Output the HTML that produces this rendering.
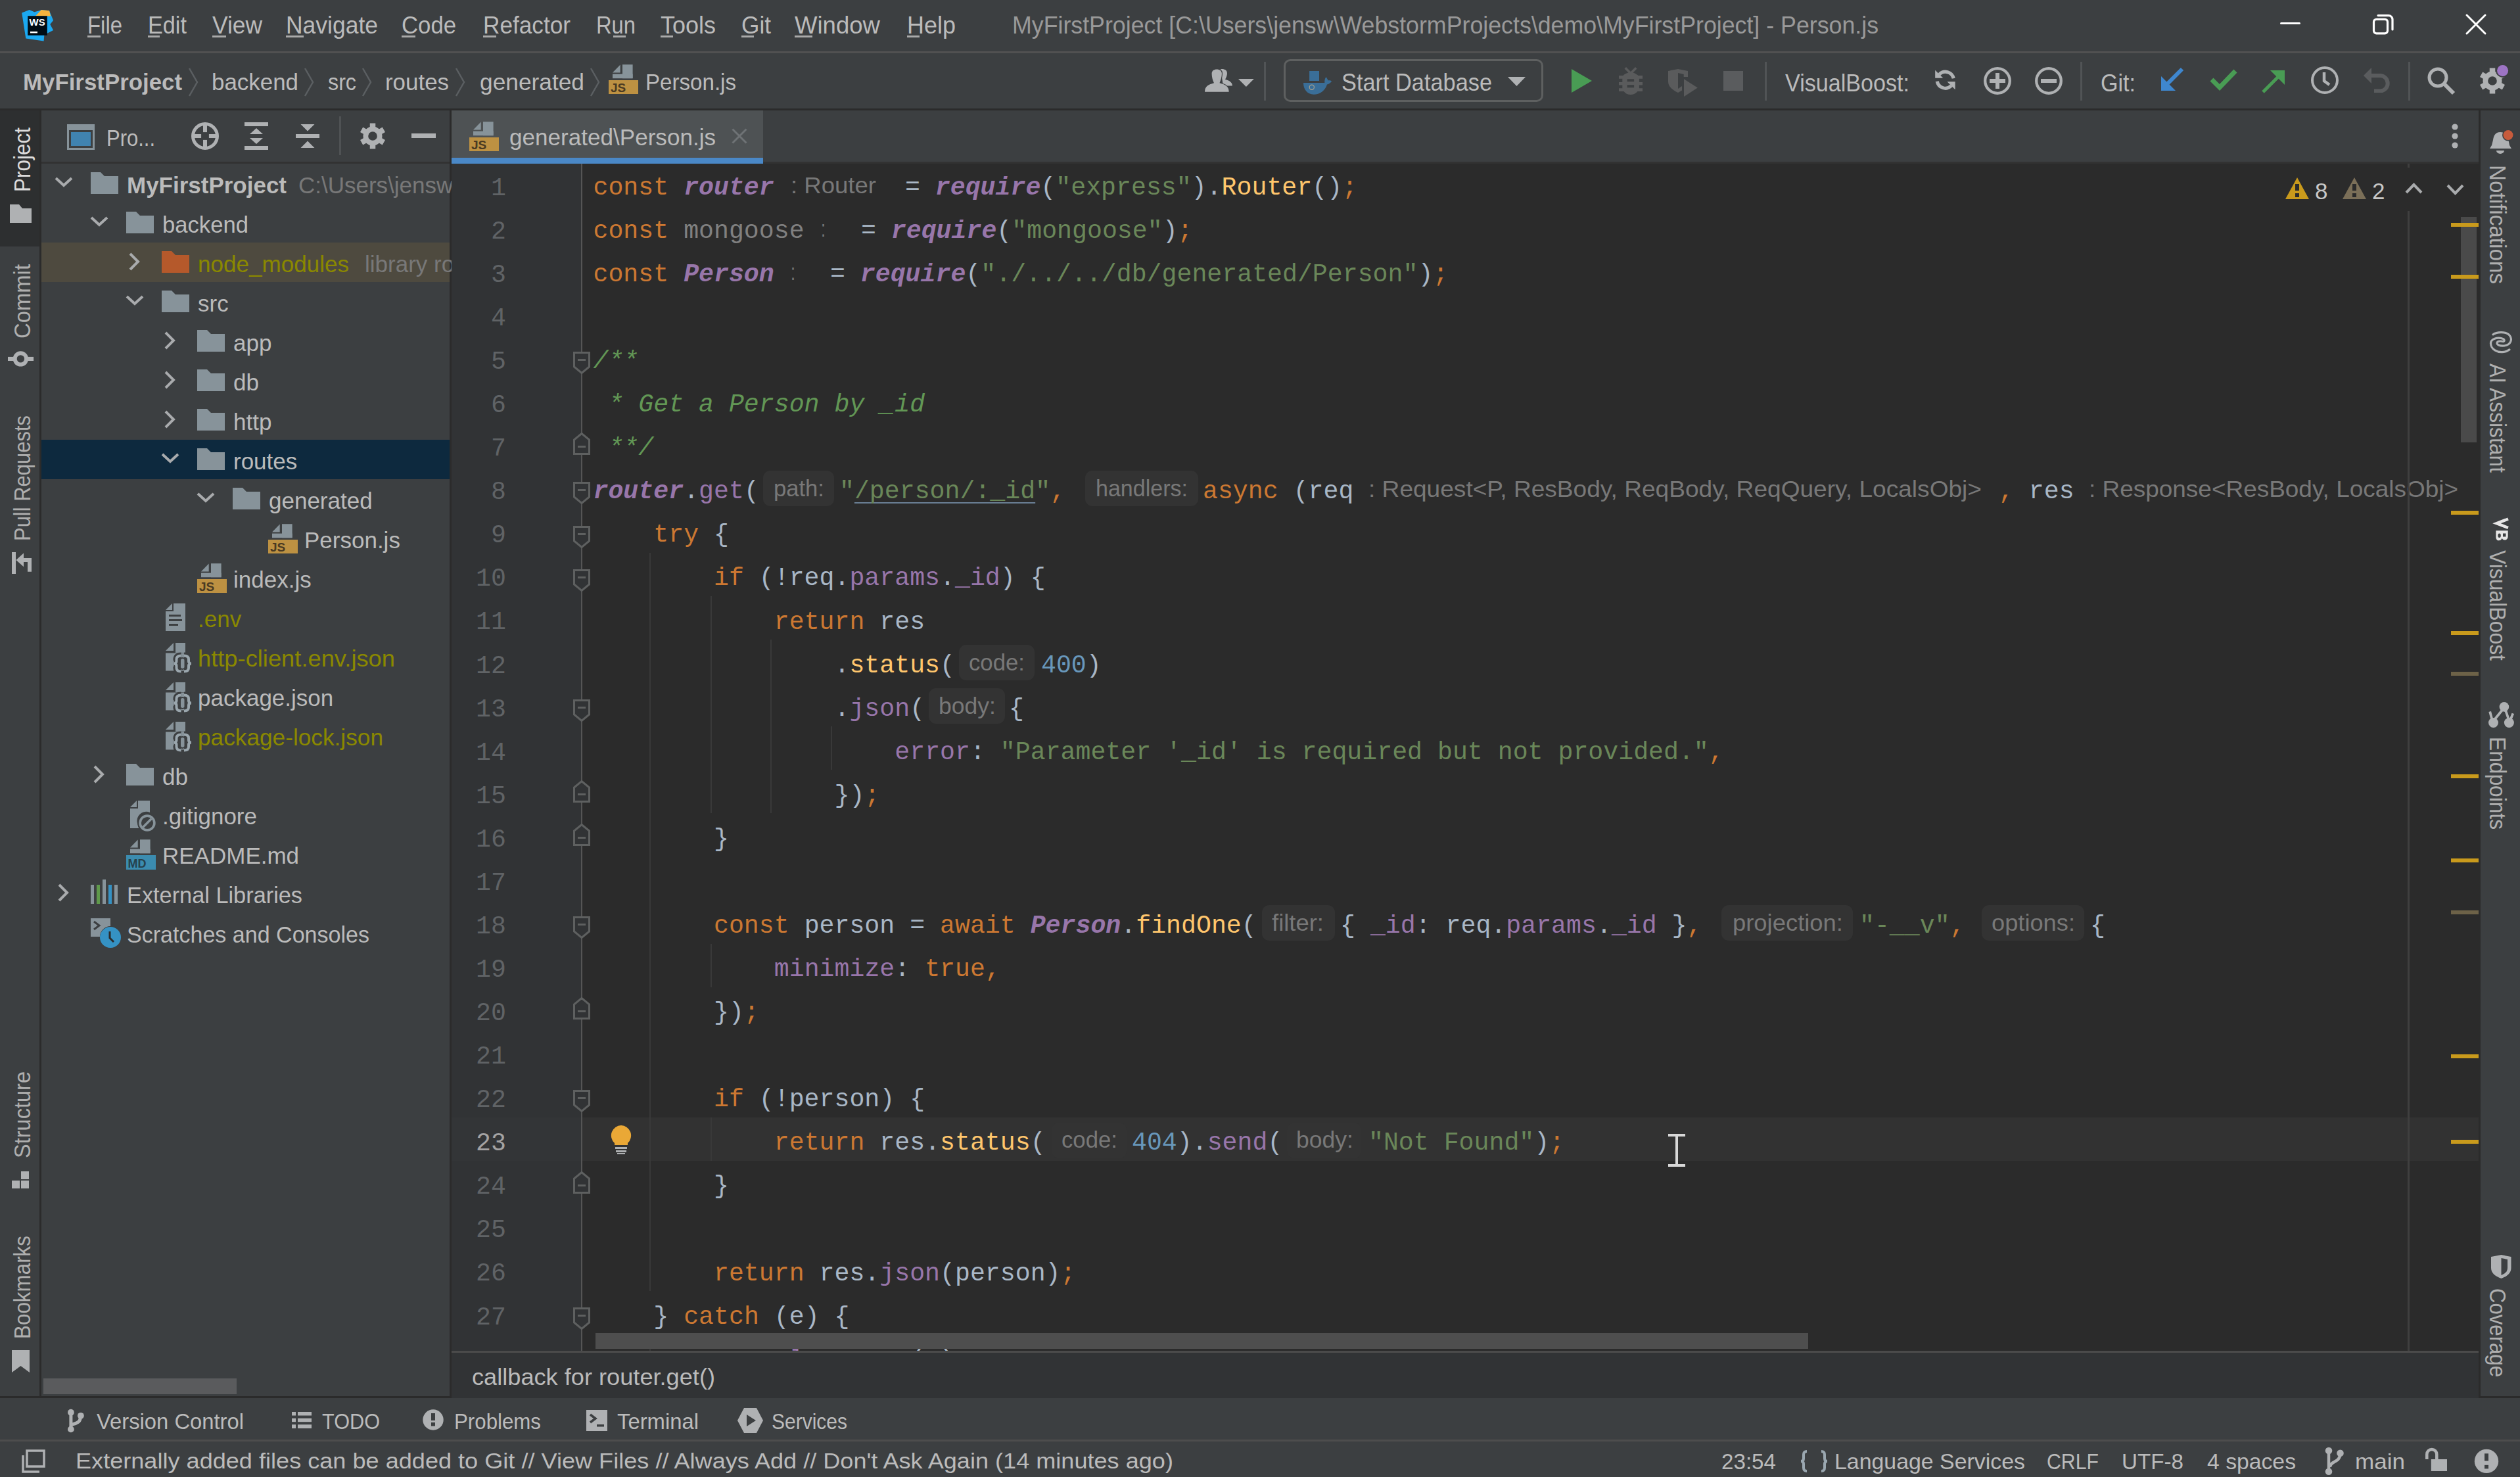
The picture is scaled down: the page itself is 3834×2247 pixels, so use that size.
<!DOCTYPE html>
<html><head><meta charset="utf-8"><style>
html,body{margin:0;padding:0;width:3834px;height:2247px;overflow:hidden;background:#3c3f41}
body>div{position:absolute}
.t{position:absolute;white-space:pre;transform-origin:0 0}
.code{position:absolute;white-space:pre;font-family:'Liberation Mono', monospace;font-size:38.23px;line-height:66px}
.hint{display:inline-block;font-family:'Liberation Sans', sans-serif;color:#787878;background:#3b3b3b;border-radius:12px;text-align:center;vertical-align:top}
</style></head><body>
<div style="left:0px;top:0px;width:3834px;height:2247px;background:#3c3f41;"></div>
<div style="left:0px;top:78px;width:3834px;height:3px;background:#515151;"></div>
<div style="left:0px;top:165px;width:3834px;height:3px;background:#2b2b2b;"></div>
<svg style="position:absolute;left:25px;top:8px;width:65px;height:62px;" viewBox="0 0 65 62"><path d="M8.2 11.6 L19.7 7.1 L27.3 10.3 L34.9 8.2 L37.8 7.1 L50 8.2 L56.1 22.9 L51.3 29 L56.1 38 L42.4 45 L41.6 54.6 L14.3 50.4Z" fill="#1ba8f0"/>
<path d="M29.4 16 L37.8 7.1 L50 8.2 L52 16.4Z" fill="#f5b33e"/>
<rect x="17.2" y="16.2" width="29.6" height="29.6" fill="#000c14"/>
<text x="19.6" y="31" font-family="Liberation Sans" font-weight="bold" font-size="15.5" fill="#fff" textLength="24" lengthAdjust="spacingAndGlyphs">WS</text>
<rect x="21" y="39.9" width="11" height="2.5" fill="#fff"/></svg>
<div id="feda0547f99" class="t" style="left:133.0px;top:20.5px;font-size:36px;line-height:36px;color:#bbbbbb;font-family:'Liberation Sans', sans-serif;transform:scaleX(0.9135);">File</div>
<div id="f23c7e91d99" class="t" style="left:225.0px;top:20.5px;font-size:36px;line-height:36px;color:#bbbbbb;font-family:'Liberation Sans', sans-serif;transform:scaleX(0.9509);">Edit</div>
<div id="f96007ed048" class="t" style="left:323.0px;top:20.5px;font-size:36px;line-height:36px;color:#bbbbbb;font-family:'Liberation Sans', sans-serif;transform:scaleX(0.9820);">View</div>
<div id="f32f33897f7" class="t" style="left:435.0px;top:20.5px;font-size:36px;line-height:36px;color:#bbbbbb;font-family:'Liberation Sans', sans-serif;transform:scaleX(0.9853);">Navigate</div>
<div id="fb002a6941b" class="t" style="left:611.0px;top:20.5px;font-size:36px;line-height:36px;color:#bbbbbb;font-family:'Liberation Sans', sans-serif;transform:scaleX(0.9644);">Code</div>
<div id="f7c903b5134" class="t" style="left:735.0px;top:20.5px;font-size:36px;line-height:36px;color:#bbbbbb;font-family:'Liberation Sans', sans-serif;transform:scaleX(0.9775);">Refactor</div>
<div id="f506e35b7c9" class="t" style="left:907.0px;top:20.5px;font-size:36px;line-height:36px;color:#bbbbbb;font-family:'Liberation Sans', sans-serif;transform:scaleX(0.9084);">Run</div>
<div id="ff6007e103c" class="t" style="left:1005.0px;top:20.5px;font-size:36px;line-height:36px;color:#bbbbbb;font-family:'Liberation Sans', sans-serif;transform:scaleX(0.9994);">Tools</div>
<div id="f9b4eb32b7e" class="t" style="left:1128.0px;top:20.5px;font-size:36px;line-height:36px;color:#bbbbbb;font-family:'Liberation Sans', sans-serif;transform:scaleX(0.9779);">Git</div>
<div id="fdccec290fd" class="t" style="left:1209.0px;top:20.5px;font-size:36px;line-height:36px;color:#bbbbbb;font-family:'Liberation Sans', sans-serif;transform:scaleX(1.0153);">Window</div>
<div id="fa55eff7f53" class="t" style="left:1380.0px;top:20.5px;font-size:36px;line-height:36px;color:#bbbbbb;font-family:'Liberation Sans', sans-serif;transform:scaleX(0.9994);">Help</div>
<div style="left:133px;top:54px;width:20px;height:3px;background:#a9a9a9;"></div>
<div style="left:225px;top:54px;width:18px;height:3px;background:#a9a9a9;"></div>
<div style="left:323px;top:54px;width:21px;height:3px;background:#a9a9a9;"></div>
<div style="left:435px;top:54px;width:27px;height:3px;background:#a9a9a9;"></div>
<div style="left:611px;top:54px;width:21px;height:3px;background:#a9a9a9;"></div>
<div style="left:735px;top:54px;width:20px;height:3px;background:#a9a9a9;"></div>
<div style="left:933px;top:54px;width:19px;height:3px;background:#a9a9a9;"></div>
<div style="left:1005px;top:54px;width:19px;height:3px;background:#a9a9a9;"></div>
<div style="left:1128px;top:54px;width:19px;height:3px;background:#a9a9a9;"></div>
<div style="left:1209px;top:54px;width:27px;height:3px;background:#a9a9a9;"></div>
<div style="left:1380px;top:54px;width:19px;height:3px;background:#a9a9a9;"></div>
<div id="f99410466d1" class="t" style="left:1540.0px;top:20.5px;font-size:36px;line-height:36px;color:#999999;font-family:'Liberation Sans', sans-serif;transform:scaleX(0.9928);">MyFirstProject [C:\Users\jensw\WebstormProjects\demo\MyFirstProject] - Person.js</div>
<div style="left:3469px;top:34px;width:31px;height:3.2px;background:#ffffff;border-radius:2px;"></div>
<svg style="position:absolute;left:3608px;top:20px;width:34px;height:34px;" viewBox="0 0 34 34"><rect x="3.5" y="9.3" width="21" height="21.5" rx="4" fill="none" stroke="#ffffff" stroke-width="3.2"/><path d="M10 3.6 H26 a6 6 0 0 1 6 6 V25" fill="none" stroke="#ffffff" stroke-width="3.2" stroke-linecap="round"/></svg>
<svg style="position:absolute;left:3750px;top:20px;width:34px;height:34px;" viewBox="0 0 34 34"><path d="M3 3 L31 31 M31 3 L3 31" stroke="#ffffff" stroke-width="3" stroke-linecap="round"/></svg>
<div id="fe293cc670c" class="t" style="left:35.0px;top:107.4px;font-size:35px;line-height:35px;color:#bbbbbb;font-family:'Liberation Sans', sans-serif;transform:scaleX(0.9954);font-weight:bold;">MyFirstProject</div>
<div id="f69163ef772" class="t" style="left:322.0px;top:107.4px;font-size:35px;line-height:35px;color:#bbbbbb;font-family:'Liberation Sans', sans-serif;transform:scaleX(0.9975);">backend</div>
<div id="f6094275ac2" class="t" style="left:499.0px;top:107.4px;font-size:35px;line-height:35px;color:#bbbbbb;font-family:'Liberation Sans', sans-serif;transform:scaleX(0.9216);">src</div>
<div id="f3d4729c1db" class="t" style="left:586.0px;top:107.4px;font-size:35px;line-height:35px;color:#bbbbbb;font-family:'Liberation Sans', sans-serif;transform:scaleX(0.9971);">routes</div>
<div id="f08b2ab5368" class="t" style="left:730.0px;top:107.4px;font-size:35px;line-height:35px;color:#bbbbbb;font-family:'Liberation Sans', sans-serif;transform:scaleX(1.0086);">generated</div>
<svg style="position:absolute;left:286px;top:103px;width:16px;height:44px;" viewBox="0 0 16 44"><path d="M2 1 L14 22 L2 43" fill="none" stroke="#5b5f62" stroke-width="2.5"/></svg>
<svg style="position:absolute;left:462px;top:103px;width:16px;height:44px;" viewBox="0 0 16 44"><path d="M2 1 L14 22 L2 43" fill="none" stroke="#5b5f62" stroke-width="2.5"/></svg>
<svg style="position:absolute;left:550px;top:103px;width:16px;height:44px;" viewBox="0 0 16 44"><path d="M2 1 L14 22 L2 43" fill="none" stroke="#5b5f62" stroke-width="2.5"/></svg>
<svg style="position:absolute;left:692px;top:103px;width:16px;height:44px;" viewBox="0 0 16 44"><path d="M2 1 L14 22 L2 43" fill="none" stroke="#5b5f62" stroke-width="2.5"/></svg>
<svg style="position:absolute;left:897px;top:103px;width:16px;height:44px;" viewBox="0 0 16 44"><path d="M2 1 L14 22 L2 43" fill="none" stroke="#5b5f62" stroke-width="2.5"/></svg>
<svg style="position:absolute;left:926px;top:98px;width:46px;height:46px;" viewBox="0 0 46 46"><path d="M6 12.4 L17.7 0.6 V12.4Z" fill="#87939a"/><rect x="21" y="0.2" width="15.6" height="21" fill="#87939a"/><rect x="6" y="14.6" width="30.6" height="6.6" fill="#87939a"/>
<rect x="0" y="24" width="45" height="21" fill="#bd9142"/><text x="3" y="41.5" font-family="Liberation Sans" font-weight="bold" font-size="19" fill="#4a3a22">JS</text></svg>
<div id="f7bb66304bf" class="t" style="left:982.0px;top:107.4px;font-size:35px;line-height:35px;color:#bbbbbb;font-family:'Liberation Sans', sans-serif;transform:scaleX(0.9458);">Person.js</div>
<svg style="position:absolute;left:1825px;top:95px;width:90px;height:55px;" viewBox="0 0 90 55"><path d="M32 10.2 C37.5 9.5 42 11.5 42 16.5 C42 20 40.5 23 39 25.8 C45 27.5 49.9 30 49.9 35.4 H36 Z" fill="#afb1b3"/><path d="M8 44.7 C8 36 14 33.5 22 31.2 C20 27 18.6 22 18.6 17 C18.6 12.5 22 10.4 26.2 10.4 C30.5 10.4 33.9 12.5 33.9 17 C33.9 22 32.2 27 30.5 31.2 C38.5 33.5 44.7 36 44.7 44.7 Z" fill="#afb1b3" stroke="#3c3f41" stroke-width="2.2" paint-order="stroke"/><path d="M59 25 H82.8 L70.9 36.9Z" fill="#afb1b3"/></svg>
<div style="left:1923px;top:94px;width:3px;height:59px;background:#515456;"></div>
<div style="left:1953px;top:90px;width:395px;height:65px;box-sizing:border-box;border:3px solid #5e6060;border-radius:10px;position:absolute"></div>
<svg style="position:absolute;left:1975px;top:100px;width:60px;height:50px;" viewBox="0 0 60 50"><rect x="17.1" y="8" width="14.9" height="15" fill="#3a6e98"/><path d="M8 26 H40.3 C40 22 41 19 42.5 17.3 C44 19 45 21 45.5 22.5 C47.5 22 49.5 22.5 51.1 23.7 C49 26.5 46.5 28 44 28.5 C41 38 33 43.7 23.7 43.7 C14 43.7 8 36 8 26Z" fill="#3a6e98"/><circle cx="20.8" cy="32.8" r="3.6" fill="none" stroke="#a9a28d" stroke-width="1.2"/></svg>
<div id="fde960cc09b" class="t" style="left:2041.0px;top:107.5px;font-size:36px;line-height:36px;color:#bbbbbb;font-family:'Liberation Sans', sans-serif;transform:scaleX(0.9536);">Start Database</div>
<svg style="position:absolute;left:2294px;top:117px;width:27px;height:14px;" viewBox="0 0 27 14"><path d="M0 0 H27 L13.5 14Z" fill="#afb1b3"/></svg>
<svg style="position:absolute;left:2391px;top:105px;width:31px;height:36px;" viewBox="0 0 31 36"><path d="M0 0 L31 18 L0 36Z" fill="#499c54"/></svg>
<svg style="position:absolute;left:2455px;top:95px;width:140px;height:55px;" viewBox="0 0 140 55"><g fill="#5a5b5c"><path d="M16.5 9.5 L19 7 L26 14 L33 7 L35.5 9.5 L29.5 15.5 C34 17 37 19.5 37.5 20 H44 V24.7 H38.9 V30 H44 V34.4 H38.9 V39.2 H44 V44 H36.5 C34 47 30 49 25.9 49 C21.5 49 17.5 47 15.5 44 H8 V39.2 H13.3 V34.4 H8 V30 H13.3 V24.7 H8 V20 H14.5 C15.5 18.5 18.5 16.5 22.5 15.5Z"/></g><rect x="20.6" y="25.3" width="10.5" height="3.9" fill="#3c3f41"/><rect x="20.6" y="34.2" width="10.5" height="4.1" fill="#3c3f41"/><path d="M83 13 L98 10 L113 13 V22 H106.7 V18 L98 16 V40 L104 36 V42.5 L98 46 C90 42 83 37 83 29Z" fill="#5a5b5c"/><path d="M107 25.3 L127.8 38.6 L107 52Z" fill="#5a5b5c"/></svg>
<div style="left:2622px;top:108px;width:30px;height:30px;background:#5a5c5e;"></div>
<div style="left:2685px;top:94px;width:3px;height:59px;background:#515456;"></div>
<div id="f8377cdb799" class="t" style="left:2716.0px;top:108.5px;font-size:36px;line-height:36px;color:#bbbbbb;font-family:'Liberation Sans', sans-serif;transform:scaleX(0.9475);">VisualBoost:</div>
<svg style="position:absolute;left:2935px;top:95px;width:45px;height:50px;" viewBox="0 0 45 50"><path d="M15.5 18.3 A12.7 12.7 0 0 1 37.2 24.3" fill="none" stroke="#afb1b3" stroke-width="5.2"/><path d="M9.2 11.7 V23.75 H21.25Z" fill="#afb1b3"/><path d="M12.2 28.8 A12.7 12.7 0 0 0 33.8 35.3" fill="none" stroke="#afb1b3" stroke-width="5.2"/><path d="M27.5 29.2 H39.6 V41.25Z" fill="#afb1b3"/></svg>
<svg style="position:absolute;left:3017px;top:101px;width:44px;height:44px;" viewBox="0 0 44 44"><circle cx="22" cy="22" r="18.8" fill="none" stroke="#afb1b3" stroke-width="4.3"/><rect x="10" y="19" width="24" height="6" fill="#afb1b3"/><rect x="19" y="10" width="6" height="24" fill="#afb1b3"/></svg>
<svg style="position:absolute;left:3095px;top:101px;width:44px;height:44px;" viewBox="0 0 44 44"><circle cx="22" cy="22" r="18.8" fill="none" stroke="#afb1b3" stroke-width="4.3"/><rect x="10" y="19" width="24" height="6" fill="#afb1b3"/></svg>
<div style="left:3165px;top:94px;width:3px;height:59px;background:#515456;"></div>
<div id="f1daf2e1d26" class="t" style="left:3196.0px;top:108.5px;font-size:36px;line-height:36px;color:#bbbbbb;font-family:'Liberation Sans', sans-serif;transform:scaleX(0.9462);">Git:</div>
<svg style="position:absolute;left:3288px;top:102px;width:36px;height:36px;" viewBox="0 0 36 36"><path d="M32 3 L8 27" stroke="#3f87cf" stroke-width="6"/><path d="M0 14 V36 H22Z" fill="#3f87cf"/></svg>
<svg style="position:absolute;left:3362px;top:104px;width:42px;height:34px;" viewBox="0 0 42 34"><path d="M3 17 L15 29 L39 4" fill="none" stroke="#499c54" stroke-width="7"/></svg>
<svg style="position:absolute;left:3440px;top:107px;width:36px;height:36px;" viewBox="0 0 36 36"><path d="M3 33 L27 9" stroke="#499c54" stroke-width="5"/><path d="M14 0 H36 V22Z" fill="#499c54"/></svg>
<svg style="position:absolute;left:3515px;top:100px;width:44px;height:44px;" viewBox="0 0 44 44"><circle cx="22" cy="22" r="19" fill="none" stroke="#afb1b3" stroke-width="4"/><path d="M21 10 V23 L29 29" fill="none" stroke="#afb1b3" stroke-width="4.5"/></svg>
<svg style="position:absolute;left:3596px;top:101px;width:42px;height:40px;" viewBox="0 0 42 40"><path d="M8 14 H26 A11.8 11.8 0 0 1 26 37.5 H16" fill="none" stroke="#5a5c5e" stroke-width="6"/><path d="M0 14 L12 2 V26Z" fill="#5a5c5e"/></svg>
<div style="left:3664px;top:94px;width:3px;height:59px;background:#515456;"></div>
<svg style="position:absolute;left:3692px;top:101px;width:44px;height:44px;" viewBox="0 0 44 44"><circle cx="17" cy="17" r="13" fill="none" stroke="#afb1b3" stroke-width="5"/><path d="M26 26 L41 41" stroke="#afb1b3" stroke-width="6"/></svg>
<svg style="position:absolute;left:3762px;top:93px;width:60px;height:60px;" viewBox="0 0 60 60"><g transform="translate(30 30)"><circle r="14.5" fill="#afb1b3"/><rect x="-4.25" y="-19.5" width="8.5" height="39.0" fill="#afb1b3" transform="rotate(0)"/><rect x="-4.25" y="-19.5" width="8.5" height="39.0" fill="#afb1b3" transform="rotate(60)"/><rect x="-4.25" y="-19.5" width="8.5" height="39.0" fill="#afb1b3" transform="rotate(120)"/><circle r="6.8" fill="#3c3f41"/></g><circle cx="45.6" cy="14.4" r="10.5" fill="#3c3f41"/><circle cx="45.6" cy="14.4" r="8.5" fill="#9d74c4"/></svg>
<div style="left:60px;top:168px;width:3px;height:1956px;background:#2b2b2b;"></div>
<div style="left:0px;top:168px;width:60px;height:207px;background:#2d2f30;"></div>
<div id="fd52d5ee965" class="t" style="left:12.7px;top:292px;font-size:35px;line-height:42.0px;color:#dcdcdc;font-family:'Liberation Sans', sans-serif;transform:rotate(-90deg) scaleX(0.8996);transform-origin:0 0">Project</div>
<svg style="position:absolute;left:15px;top:311px;width:33px;height:28px;" viewBox="0 0 33 28"><path d="M0 0 H14 L19 6 H33 V28 H0Z" fill="#afb1b3"/></svg>
<div id="f18ef71f729" class="t" style="left:12.7px;top:515px;font-size:35px;line-height:42.0px;color:#afafaf;font-family:'Liberation Sans', sans-serif;transform:rotate(-90deg) scaleX(0.9373);transform-origin:0 0">Commit</div>
<svg style="position:absolute;left:11.9px;top:534px;width:40px;height:24px;" viewBox="0 0 40 24"><rect x="0" y="8.9" width="39.1" height="6.1" fill="#afb1b3"/><circle cx="19.4" cy="11.9" r="11.7" fill="#afb1b3"/><circle cx="19.4" cy="11.9" r="5.7" fill="#3c3f41"/></svg>
<div id="f4b8cfc2f76" class="t" style="left:12.7px;top:823px;font-size:35px;line-height:42.0px;color:#afafaf;font-family:'Liberation Sans', sans-serif;transform:rotate(-90deg) scaleX(0.8845);transform-origin:0 0">Pull Requests</div>
<svg style="position:absolute;left:18px;top:839px;width:32px;height:34px;" viewBox="0 0 32 34"><rect x="0" y="1" width="6" height="33" fill="#afb1b3"/><path d="M6.4 13 L18 2.6 V23.2Z" fill="#afb1b3"/><path d="M17 9.9 H30 V30.8 H24 V16 H17Z" fill="#afb1b3"/></svg>
<div id="fa8f21b3cdb" class="t" style="left:12.7px;top:1762px;font-size:35px;line-height:42.0px;color:#afafaf;font-family:'Liberation Sans', sans-serif;transform:rotate(-90deg) scaleX(0.9296);transform-origin:0 0">Structure</div>
<svg style="position:absolute;left:18px;top:1782px;width:28px;height:28px;" viewBox="0 0 28 28"><rect x="0" y="14" width="12" height="12" fill="#afb1b3"/><rect x="14" y="0" width="12" height="12" fill="#afb1b3"/><rect x="14" y="14" width="12" height="12" fill="#afb1b3"/></svg>
<div id="f70cc5ce654" class="t" style="left:12.7px;top:2037px;font-size:35px;line-height:42.0px;color:#afafaf;font-family:'Liberation Sans', sans-serif;transform:rotate(-90deg) scaleX(0.8968);transform-origin:0 0">Bookmarks</div>
<svg style="position:absolute;left:18px;top:2054px;width:27px;height:34px;" viewBox="0 0 27 34"><path d="M0 0 H27 V34 L13.5 24 L0 34Z" fill="#afb1b3"/></svg>
<div style="left:63px;top:246px;width:621px;height:3px;background:#323232;"></div>
<div style="left:684px;top:168px;width:3px;height:1956px;background:#2b2b2b;"></div>
<svg style="position:absolute;left:102px;top:189px;width:42px;height:39px;" viewBox="0 0 42 39"><rect x="0" y="0" width="42" height="39" fill="#87939a"/><rect x="3" y="9" width="36" height="27" fill="#3c3f41"/><rect x="6" y="12" width="30" height="21" fill="#4083b0"/></svg>
<div id="fb2cb6b91c5" class="t" style="left:162.0px;top:192.4px;font-size:35px;line-height:35px;color:#bbbbbb;font-family:'Liberation Sans', sans-serif;transform:scaleX(0.8847);">Pro...</div>
<svg style="position:absolute;left:291px;top:186px;width:42px;height:42px;" viewBox="0 0 42 42"><circle cx="21" cy="21" r="18.5" fill="none" stroke="#afb1b3" stroke-width="5"/><rect x="18" y="3" width="6" height="12.1" fill="#afb1b3"/><rect x="18" y="26.9" width="6" height="12.1" fill="#afb1b3"/><rect x="3" y="18" width="12.1" height="6" fill="#afb1b3"/><rect x="26.9" y="18" width="12.1" height="6" fill="#afb1b3"/></svg>
<svg style="position:absolute;left:372px;top:186px;width:36px;height:42px;" viewBox="0 0 36 42"><rect x="0" y="0" width="36" height="6" fill="#afb1b3"/><rect x="0" y="36" width="36" height="6" fill="#afb1b3"/><path d="M8 18 L18 9 L28 18Z M8 24 L18 33 L28 24Z" fill="#afb1b3"/></svg>
<svg style="position:absolute;left:450px;top:186px;width:36px;height:42px;" viewBox="0 0 36 42"><rect x="0" y="18" width="36" height="6" fill="#afb1b3"/><path d="M7.5 3 H28.5 L18 13.5Z M7.5 39 H28.5 L18 28.5Z" fill="#afb1b3"/></svg>
<div style="left:516px;top:177px;width:3px;height:59px;background:#4f5254;"></div>
<svg style="position:absolute;left:537px;top:177px;width:60px;height:60px;" viewBox="0 0 60 60"><g transform="translate(30 30)"><circle r="14.5" fill="#afb1b3"/><rect x="-4.25" y="-19.5" width="8.5" height="39.0" fill="#afb1b3" transform="rotate(0)"/><rect x="-4.25" y="-19.5" width="8.5" height="39.0" fill="#afb1b3" transform="rotate(60)"/><rect x="-4.25" y="-19.5" width="8.5" height="39.0" fill="#afb1b3" transform="rotate(120)"/><circle r="6.8" fill="#3c3f41"/></g></svg>
<div style="left:626px;top:203px;width:37px;height:7px;background:#afb1b3;"></div>
<div style="left:63px;top:369px;width:621px;height:60px;background:#4e4a3f;"></div>
<div style="left:63px;top:669px;width:621px;height:60px;background:#0d293e;"></div>
<svg style="position:absolute;left:83px;top:268.5px;width:28px;height:16px;" viewBox="0 0 28 16"><path d="M2 2 L14 13 L26 2" fill="none" stroke="#a9abad" stroke-width="4"/></svg>
<svg style="position:absolute;left:138px;top:262px;width:42px;height:33px;" viewBox="0 0 42 33"><path d="M0 0 H15 L21 6 H42 V33 H0Z" fill="#87939a"/></svg>
<div id="f47db73a191" class="t" style="left:193.0px;top:264.4px;font-size:35px;line-height:35px;color:#bbbbbb;font-family:'Liberation Sans', sans-serif;transform:scaleX(0.9995);font-weight:bold;">MyFirstProject</div>
<div class="t" style="left:454.0px;top:264.4px;font-size:35px;line-height:35px;color:#787878;font-family:'Liberation Sans', sans-serif;">C:\Users\jensw</div>
<svg style="position:absolute;left:137px;top:328.5px;width:28px;height:16px;" viewBox="0 0 28 16"><path d="M2 2 L14 13 L26 2" fill="none" stroke="#a9abad" stroke-width="4"/></svg>
<svg style="position:absolute;left:192px;top:322px;width:42px;height:33px;" viewBox="0 0 42 33"><path d="M0 0 H15 L21 6 H42 V33 H0Z" fill="#87939a"/></svg>
<div id="fc258dba715" class="t" style="left:247.0px;top:324.4px;font-size:35px;line-height:35px;color:#bbbbbb;font-family:'Liberation Sans', sans-serif;transform:scaleX(0.9900);">backend</div>
<svg style="position:absolute;left:196px;top:383.5px;width:17px;height:28px;" viewBox="0 0 17 28"><path d="M2 2 L14 14 L2 26" fill="none" stroke="#a9abad" stroke-width="4"/></svg>
<svg style="position:absolute;left:246px;top:382px;width:42px;height:33px;" viewBox="0 0 42 33"><path d="M0 0 H15 L21 6 H42 V33 H0Z" fill="#b5592b"/></svg>
<div id="f3b07762618" class="t" style="left:301.0px;top:384.4px;font-size:35px;line-height:35px;color:#8a8800;font-family:'Liberation Sans', sans-serif;transform:scaleX(1.0016);">node_modules</div>
<div class="t" style="left:555.0px;top:384.4px;font-size:35px;line-height:35px;color:#787878;font-family:'Liberation Sans', sans-serif;">library root</div>
<svg style="position:absolute;left:191px;top:448.5px;width:28px;height:16px;" viewBox="0 0 28 16"><path d="M2 2 L14 13 L26 2" fill="none" stroke="#a9abad" stroke-width="4"/></svg>
<svg style="position:absolute;left:246px;top:442px;width:42px;height:33px;" viewBox="0 0 42 33"><path d="M0 0 H15 L21 6 H42 V33 H0Z" fill="#87939a"/></svg>
<div class="t" style="left:301.0px;top:444.4px;font-size:35px;line-height:35px;color:#bbbbbb;font-family:'Liberation Sans', sans-serif;">src</div>
<svg style="position:absolute;left:250px;top:503.5px;width:17px;height:28px;" viewBox="0 0 17 28"><path d="M2 2 L14 14 L2 26" fill="none" stroke="#a9abad" stroke-width="4"/></svg>
<svg style="position:absolute;left:300px;top:502px;width:42px;height:33px;" viewBox="0 0 42 33"><path d="M0 0 H15 L21 6 H42 V33 H0Z" fill="#87939a"/></svg>
<div class="t" style="left:355.0px;top:504.4px;font-size:35px;line-height:35px;color:#bbbbbb;font-family:'Liberation Sans', sans-serif;">app</div>
<svg style="position:absolute;left:250px;top:563.5px;width:17px;height:28px;" viewBox="0 0 17 28"><path d="M2 2 L14 14 L2 26" fill="none" stroke="#a9abad" stroke-width="4"/></svg>
<svg style="position:absolute;left:300px;top:562px;width:42px;height:33px;" viewBox="0 0 42 33"><path d="M0 0 H15 L21 6 H42 V33 H0Z" fill="#87939a"/></svg>
<div class="t" style="left:355.0px;top:564.4px;font-size:35px;line-height:35px;color:#bbbbbb;font-family:'Liberation Sans', sans-serif;">db</div>
<svg style="position:absolute;left:250px;top:623.5px;width:17px;height:28px;" viewBox="0 0 17 28"><path d="M2 2 L14 14 L2 26" fill="none" stroke="#a9abad" stroke-width="4"/></svg>
<svg style="position:absolute;left:300px;top:622px;width:42px;height:33px;" viewBox="0 0 42 33"><path d="M0 0 H15 L21 6 H42 V33 H0Z" fill="#87939a"/></svg>
<div class="t" style="left:355.0px;top:624.4px;font-size:35px;line-height:35px;color:#bbbbbb;font-family:'Liberation Sans', sans-serif;">http</div>
<svg style="position:absolute;left:245px;top:688.5px;width:28px;height:16px;" viewBox="0 0 28 16"><path d="M2 2 L14 13 L26 2" fill="none" stroke="#a9abad" stroke-width="4"/></svg>
<svg style="position:absolute;left:300px;top:682px;width:42px;height:33px;" viewBox="0 0 42 33"><path d="M0 0 H15 L21 6 H42 V33 H0Z" fill="#87939a"/></svg>
<div class="t" style="left:355.0px;top:684.4px;font-size:35px;line-height:35px;color:#bbbbbb;font-family:'Liberation Sans', sans-serif;">routes</div>
<svg style="position:absolute;left:299px;top:748.5px;width:28px;height:16px;" viewBox="0 0 28 16"><path d="M2 2 L14 13 L26 2" fill="none" stroke="#a9abad" stroke-width="4"/></svg>
<svg style="position:absolute;left:354px;top:742px;width:42px;height:33px;" viewBox="0 0 42 33"><path d="M0 0 H15 L21 6 H42 V33 H0Z" fill="#87939a"/></svg>
<div class="t" style="left:409.0px;top:744.4px;font-size:35px;line-height:35px;color:#bbbbbb;font-family:'Liberation Sans', sans-serif;">generated</div>
<svg style="position:absolute;left:408px;top:797px;width:46px;height:46px;" viewBox="0 0 46 46"><path d="M6 12.4 L17.7 0.6 V12.4Z" fill="#87939a"/><rect x="21" y="0.2" width="15.6" height="21" fill="#87939a"/><rect x="6" y="14.6" width="30.6" height="6.6" fill="#87939a"/>
<rect x="0" y="24" width="45" height="21" fill="#bd9142"/><text x="3" y="41.5" font-family="Liberation Sans" font-weight="bold" font-size="19" fill="#4a3a22">JS</text></svg>
<div class="t" style="left:463.0px;top:804.4px;font-size:35px;line-height:35px;color:#bbbbbb;font-family:'Liberation Sans', sans-serif;">Person.js</div>
<svg style="position:absolute;left:300px;top:857px;width:46px;height:46px;" viewBox="0 0 46 46"><path d="M6 12.4 L17.7 0.6 V12.4Z" fill="#87939a"/><rect x="21" y="0.2" width="15.6" height="21" fill="#87939a"/><rect x="6" y="14.6" width="30.6" height="6.6" fill="#87939a"/>
<rect x="0" y="24" width="45" height="21" fill="#bd9142"/><text x="3" y="41.5" font-family="Liberation Sans" font-weight="bold" font-size="19" fill="#4a3a22">JS</text></svg>
<div class="t" style="left:355.0px;top:864.4px;font-size:35px;line-height:35px;color:#bbbbbb;font-family:'Liberation Sans', sans-serif;">index.js</div>
<svg style="position:absolute;left:252px;top:918px;width:30px;height:42px;" viewBox="0 0 30 42"><path d="M0 10 L10 0 V10Z" fill="#87939a"/><path d="M12 0 H30 V42 H0 V12 H12Z" fill="#87939a"/><rect x="5" y="17" width="18" height="3" fill="#3c3f41"/><rect x="5" y="24" width="20" height="3" fill="#3c3f41"/><rect x="5" y="31" width="14" height="3" fill="#3c3f41"/></svg>
<div class="t" style="left:301.0px;top:924.4px;font-size:35px;line-height:35px;color:#8a8800;font-family:'Liberation Sans', sans-serif;">.env</div>
<svg style="position:absolute;left:252px;top:978px;width:42px;height:48px;" viewBox="0 0 42 48"><path d="M0 12 L12 0 V12Z" fill="#87939a"/><rect x="15" y="0" width="15" height="15" fill="#87939a"/><rect x="0" y="15.5" width="30" height="27" fill="#87939a"/><path d="M23.5 19.5 Q16.5 19.5 16.5 25 V28 Q16.5 31.5 12.5 31.5 Q16.5 31.5 16.5 35 V38 Q16.5 43.5 23.5 43.5 M28 19.5 Q35 19.5 35 25 V28 Q35 31.5 39 31.5 Q35 31.5 35 35 V38 Q35 43.5 28 43.5" fill="none" stroke="#3c3f41" stroke-width="10"/><rect x="20.5" y="22" width="10" height="19" rx="5" fill="#3c3f41"/><path d="M23.5 19.5 Q16.5 19.5 16.5 25 V28 Q16.5 31.5 12.5 31.5 Q16.5 31.5 16.5 35 V38 Q16.5 43.5 23.5 43.5 M28 19.5 Q35 19.5 35 25 V28 Q35 31.5 39 31.5 Q35 31.5 35 35 V38 Q35 43.5 28 43.5" fill="none" stroke="#9aa6ad" stroke-width="4"/><rect x="23" y="24" width="5.5" height="15" rx="2.7" fill="#87939a"/></svg>
<div id="f208b6b4c0d" class="t" style="left:301.0px;top:984.4px;font-size:35px;line-height:35px;color:#8a8800;font-family:'Liberation Sans', sans-serif;transform:scaleX(1.0372);">http-client.env.json</div>
<svg style="position:absolute;left:252px;top:1038px;width:42px;height:48px;" viewBox="0 0 42 48"><path d="M0 12 L12 0 V12Z" fill="#87939a"/><rect x="15" y="0" width="15" height="15" fill="#87939a"/><rect x="0" y="15.5" width="30" height="27" fill="#87939a"/><path d="M23.5 19.5 Q16.5 19.5 16.5 25 V28 Q16.5 31.5 12.5 31.5 Q16.5 31.5 16.5 35 V38 Q16.5 43.5 23.5 43.5 M28 19.5 Q35 19.5 35 25 V28 Q35 31.5 39 31.5 Q35 31.5 35 35 V38 Q35 43.5 28 43.5" fill="none" stroke="#3c3f41" stroke-width="10"/><rect x="20.5" y="22" width="10" height="19" rx="5" fill="#3c3f41"/><path d="M23.5 19.5 Q16.5 19.5 16.5 25 V28 Q16.5 31.5 12.5 31.5 Q16.5 31.5 16.5 35 V38 Q16.5 43.5 23.5 43.5 M28 19.5 Q35 19.5 35 25 V28 Q35 31.5 39 31.5 Q35 31.5 35 35 V38 Q35 43.5 28 43.5" fill="none" stroke="#9aa6ad" stroke-width="4"/><rect x="23" y="24" width="5.5" height="15" rx="2.7" fill="#87939a"/></svg>
<div class="t" style="left:301.0px;top:1044.4px;font-size:35px;line-height:35px;color:#bbbbbb;font-family:'Liberation Sans', sans-serif;">package.json</div>
<svg style="position:absolute;left:252px;top:1098px;width:42px;height:48px;" viewBox="0 0 42 48"><path d="M0 12 L12 0 V12Z" fill="#87939a"/><rect x="15" y="0" width="15" height="15" fill="#87939a"/><rect x="0" y="15.5" width="30" height="27" fill="#87939a"/><path d="M23.5 19.5 Q16.5 19.5 16.5 25 V28 Q16.5 31.5 12.5 31.5 Q16.5 31.5 16.5 35 V38 Q16.5 43.5 23.5 43.5 M28 19.5 Q35 19.5 35 25 V28 Q35 31.5 39 31.5 Q35 31.5 35 35 V38 Q35 43.5 28 43.5" fill="none" stroke="#3c3f41" stroke-width="10"/><rect x="20.5" y="22" width="10" height="19" rx="5" fill="#3c3f41"/><path d="M23.5 19.5 Q16.5 19.5 16.5 25 V28 Q16.5 31.5 12.5 31.5 Q16.5 31.5 16.5 35 V38 Q16.5 43.5 23.5 43.5 M28 19.5 Q35 19.5 35 25 V28 Q35 31.5 39 31.5 Q35 31.5 35 35 V38 Q35 43.5 28 43.5" fill="none" stroke="#9aa6ad" stroke-width="4"/><rect x="23" y="24" width="5.5" height="15" rx="2.7" fill="#87939a"/></svg>
<div id="f73e4d27223" class="t" style="left:301.0px;top:1104.4px;font-size:35px;line-height:35px;color:#8a8800;font-family:'Liberation Sans', sans-serif;transform:scaleX(1.0066);">package-lock.json</div>
<svg style="position:absolute;left:142px;top:1163.5px;width:17px;height:28px;" viewBox="0 0 17 28"><path d="M2 2 L14 14 L2 26" fill="none" stroke="#a9abad" stroke-width="4"/></svg>
<svg style="position:absolute;left:192px;top:1162px;width:42px;height:33px;" viewBox="0 0 42 33"><path d="M0 0 H15 L21 6 H42 V33 H0Z" fill="#87939a"/></svg>
<div class="t" style="left:247.0px;top:1164.4px;font-size:35px;line-height:35px;color:#bbbbbb;font-family:'Liberation Sans', sans-serif;">db</div>
<svg style="position:absolute;left:198px;top:1218px;width:42px;height:50px;" viewBox="0 0 42 50"><path d="M0 10 L10 0 V10Z" fill="#87939a"/><path d="M12 0 H30 V18 A14 14 0 0 0 16 42 H0 V12 H12Z" fill="#87939a"/><circle cx="26" cy="34" r="10.9" fill="none" stroke="#3c3f41" stroke-width="8"/><circle cx="26" cy="34" r="10.9" fill="none" stroke="#87939a" stroke-width="3.6"/><path d="M19.5 40.5 L32.5 27.5" stroke="#87939a" stroke-width="3.6"/></svg>
<div class="t" style="left:247.0px;top:1224.4px;font-size:35px;line-height:35px;color:#bbbbbb;font-family:'Liberation Sans', sans-serif;">.gitignore</div>
<svg style="position:absolute;left:192px;top:1277px;width:46px;height:46px;" viewBox="0 0 46 46"><path d="M6 12.4 L17.7 0.6 V12.4Z" fill="#87939a"/><rect x="21" y="0.2" width="15.6" height="21" fill="#87939a"/><rect x="6" y="14.6" width="30.6" height="6.6" fill="#87939a"/><rect x="0" y="24" width="45" height="22" fill="#3b8cb0"/><text x="2.5" y="43" font-family="Liberation Sans" font-weight="bold" font-size="18" fill="#26414d">MD</text></svg>
<div class="t" style="left:247.0px;top:1284.4px;font-size:35px;line-height:35px;color:#bbbbbb;font-family:'Liberation Sans', sans-serif;">README.md</div>
<svg style="position:absolute;left:88px;top:1343.5px;width:17px;height:28px;" viewBox="0 0 17 28"><path d="M2 2 L14 14 L2 26" fill="none" stroke="#a9abad" stroke-width="4"/></svg>
<svg style="position:absolute;left:138px;top:1338px;width:43px;height:37px;" viewBox="0 0 43 37"><rect x="0" y="8" width="5" height="29" fill="#87939a"/><rect x="9" y="8" width="5" height="29" fill="#5f9a4b"/><rect x="18" y="0" width="5" height="37" fill="#87939a"/><rect x="27" y="8" width="5" height="29" fill="#3592c4"/><rect x="36" y="8" width="5" height="29" fill="#87939a"/></svg>
<div id="f492f61bd30" class="t" style="left:193.0px;top:1344.4px;font-size:35px;line-height:35px;color:#bbbbbb;font-family:'Liberation Sans', sans-serif;transform:scaleX(0.9804);">External Libraries</div>
<svg style="position:absolute;left:138px;top:1397px;width:46px;height:45px;" viewBox="0 0 46 45"><path d="M0 0 H30 V12 A16 16 0 0 0 14 28 H0Z" fill="#87939a"/><path d="M5 5 L13 11 L5 17" fill="none" stroke="#3c3f41" stroke-width="3"/><circle cx="30" cy="29" r="16" fill="#3592c4"/><path d="M29 20 V30 L35 36" fill="none" stroke="#2b2b2b" stroke-width="3"/></svg>
<div id="fedfa584db9" class="t" style="left:193.0px;top:1404.4px;font-size:35px;line-height:35px;color:#bbbbbb;font-family:'Liberation Sans', sans-serif;transform:scaleX(0.9726);">Scratches and Consoles</div>
<div style="left:687px;top:249px;width:3084px;height:1806px;background:#2b2b2b;"></div>
<div style="left:687px;top:246px;width:3084px;height:3px;background:#323232;"></div>
<div style="left:687px;top:168px;width:474px;height:72px;background:#4e5254;"></div>
<div style="left:687px;top:240px;width:474px;height:9px;background:#4a88c7;"></div>
<svg style="position:absolute;left:714px;top:185px;width:46px;height:46px;" viewBox="0 0 46 46"><path d="M6 12.4 L17.7 0.6 V12.4Z" fill="#87939a"/><rect x="21" y="0.2" width="15.6" height="21" fill="#87939a"/><rect x="6" y="14.6" width="30.6" height="6.6" fill="#87939a"/>
<rect x="0" y="24" width="45" height="21" fill="#bd9142"/><text x="3" y="41.5" font-family="Liberation Sans" font-weight="bold" font-size="19" fill="#4a3a22">JS</text></svg>
<div id="fa528f8a9f7" class="t" style="left:775.0px;top:191.4px;font-size:35px;line-height:35px;color:#bbbbbb;font-family:'Liberation Sans', sans-serif;transform:scaleX(1.0023);">generated\Person.js</div>
<svg style="position:absolute;left:1113px;top:195px;width:24px;height:24px;" viewBox="0 0 24 24"><path d="M1.5 1.5 L22.5 22.5 M22.5 1.5 L1.5 22.5" stroke="#6e7275" stroke-width="3"/></svg>
<svg style="position:absolute;left:3730px;top:188px;width:10px;height:10px;" viewBox="0 0 10 10"><circle cx="5" cy="5" r="4.6" fill="#afb1b3"/></svg>
<svg style="position:absolute;left:3730px;top:202px;width:10px;height:10px;" viewBox="0 0 10 10"><circle cx="5" cy="5" r="4.6" fill="#afb1b3"/></svg>
<svg style="position:absolute;left:3730px;top:216px;width:10px;height:10px;" viewBox="0 0 10 10"><circle cx="5" cy="5" r="4.6" fill="#afb1b3"/></svg>
<div style="left:687px;top:249px;width:197px;height:1806px;background:#313335;"></div>
<div style="left:886px;top:1700px;width:2885px;height:66px;background:#323232;"></div>
<div style="left:687px;top:1700px;width:197px;height:66px;background:#333537;"></div>
<div style="left:884px;top:249px;width:2px;height:1806px;background:#555555;"></div>
<div style="left:988px;top:841px;width:2px;height:1123px;background:#393939;"></div>
<div style="left:988px;top:2030px;width:2px;height:25px;background:#393939;"></div>
<div style="left:1081px;top:907px;width:2px;height:330px;background:#393939;"></div>
<div style="left:1172px;top:973px;width:2px;height:264px;background:#393939;"></div>
<div style="left:1264px;top:1105px;width:2px;height:66px;background:#393939;"></div>
<div style="left:1081px;top:1436px;width:2px;height:66px;background:#393939;"></div>
<div style="left:1081px;top:1700px;width:2px;height:66px;background:#393939;"></div>
<div class="t" style="left:747.1px;top:267.7px;font-size:38.23px;line-height:38.23px;color:#606366;font-family:'Liberation Mono', monospace;">1</div>
<div class="t" style="left:747.1px;top:333.8px;font-size:38.23px;line-height:38.23px;color:#606366;font-family:'Liberation Mono', monospace;">2</div>
<div class="t" style="left:747.1px;top:399.8px;font-size:38.23px;line-height:38.23px;color:#606366;font-family:'Liberation Mono', monospace;">3</div>
<div class="t" style="left:747.1px;top:465.9px;font-size:38.23px;line-height:38.23px;color:#606366;font-family:'Liberation Mono', monospace;">4</div>
<div class="t" style="left:747.1px;top:532.0px;font-size:38.23px;line-height:38.23px;color:#606366;font-family:'Liberation Mono', monospace;">5</div>
<div class="t" style="left:747.1px;top:598.0px;font-size:38.23px;line-height:38.23px;color:#606366;font-family:'Liberation Mono', monospace;">6</div>
<div class="t" style="left:747.1px;top:664.1px;font-size:38.23px;line-height:38.23px;color:#606366;font-family:'Liberation Mono', monospace;">7</div>
<div class="t" style="left:747.1px;top:730.2px;font-size:38.23px;line-height:38.23px;color:#606366;font-family:'Liberation Mono', monospace;">8</div>
<div class="t" style="left:747.1px;top:796.3px;font-size:38.23px;line-height:38.23px;color:#606366;font-family:'Liberation Mono', monospace;">9</div>
<div class="t" style="left:724.1px;top:862.3px;font-size:38.23px;line-height:38.23px;color:#606366;font-family:'Liberation Mono', monospace;">10</div>
<div class="t" style="left:724.1px;top:928.4px;font-size:38.23px;line-height:38.23px;color:#606366;font-family:'Liberation Mono', monospace;">11</div>
<div class="t" style="left:724.1px;top:994.5px;font-size:38.23px;line-height:38.23px;color:#606366;font-family:'Liberation Mono', monospace;">12</div>
<div class="t" style="left:724.1px;top:1060.5px;font-size:38.23px;line-height:38.23px;color:#606366;font-family:'Liberation Mono', monospace;">13</div>
<div class="t" style="left:724.1px;top:1126.6px;font-size:38.23px;line-height:38.23px;color:#606366;font-family:'Liberation Mono', monospace;">14</div>
<div class="t" style="left:724.1px;top:1192.7px;font-size:38.23px;line-height:38.23px;color:#606366;font-family:'Liberation Mono', monospace;">15</div>
<div class="t" style="left:724.1px;top:1258.7px;font-size:38.23px;line-height:38.23px;color:#606366;font-family:'Liberation Mono', monospace;">16</div>
<div class="t" style="left:724.1px;top:1324.8px;font-size:38.23px;line-height:38.23px;color:#606366;font-family:'Liberation Mono', monospace;">17</div>
<div class="t" style="left:724.1px;top:1390.9px;font-size:38.23px;line-height:38.23px;color:#606366;font-family:'Liberation Mono', monospace;">18</div>
<div class="t" style="left:724.1px;top:1457.0px;font-size:38.23px;line-height:38.23px;color:#606366;font-family:'Liberation Mono', monospace;">19</div>
<div class="t" style="left:724.1px;top:1523.0px;font-size:38.23px;line-height:38.23px;color:#606366;font-family:'Liberation Mono', monospace;">20</div>
<div class="t" style="left:724.1px;top:1589.1px;font-size:38.23px;line-height:38.23px;color:#606366;font-family:'Liberation Mono', monospace;">21</div>
<div class="t" style="left:724.1px;top:1655.2px;font-size:38.23px;line-height:38.23px;color:#606366;font-family:'Liberation Mono', monospace;">22</div>
<div class="t" style="left:724.1px;top:1721.2px;font-size:38.23px;line-height:38.23px;color:#a4a3a3;font-family:'Liberation Mono', monospace;">23</div>
<div class="t" style="left:724.1px;top:1787.3px;font-size:38.23px;line-height:38.23px;color:#606366;font-family:'Liberation Mono', monospace;">24</div>
<div class="t" style="left:724.1px;top:1853.4px;font-size:38.23px;line-height:38.23px;color:#606366;font-family:'Liberation Mono', monospace;">25</div>
<div class="t" style="left:724.1px;top:1919.4px;font-size:38.23px;line-height:38.23px;color:#606366;font-family:'Liberation Mono', monospace;">26</div>
<div class="t" style="left:724.1px;top:1985.5px;font-size:38.23px;line-height:38.23px;color:#606366;font-family:'Liberation Mono', monospace;">27</div>
<div class="t" style="left:724.1px;top:2051.6px;font-size:38.23px;line-height:38.23px;color:#606366;font-family:'Liberation Mono', monospace;">28</div>
<svg style="position:absolute;left:872px;top:535px;width:26px;height:34px;" viewBox="0 0 26 34"><path d="M1.5 1.5 H24.5 V23 L13 32.5 L1.5 23Z" fill="#313335" stroke="#5e6060" stroke-width="3"/><rect x="7" y="11" width="12" height="3" fill="#5e6060"/></svg>
<svg style="position:absolute;left:872px;top:658px;width:26px;height:34px;" viewBox="0 0 26 34"><path d="M1.5 32.5 H24.5 V11 L13 1.5 L1.5 11Z" fill="#313335" stroke="#5e6060" stroke-width="3"/><rect x="7" y="20" width="12" height="3" fill="#5e6060"/></svg>
<svg style="position:absolute;left:872px;top:733px;width:26px;height:34px;" viewBox="0 0 26 34"><path d="M1.5 1.5 H24.5 V23 L13 32.5 L1.5 23Z" fill="#313335" stroke="#5e6060" stroke-width="3"/><rect x="7" y="11" width="12" height="3" fill="#5e6060"/></svg>
<svg style="position:absolute;left:872px;top:800px;width:26px;height:34px;" viewBox="0 0 26 34"><path d="M1.5 1.5 H24.5 V23 L13 32.5 L1.5 23Z" fill="#313335" stroke="#5e6060" stroke-width="3"/><rect x="7" y="11" width="12" height="3" fill="#5e6060"/></svg>
<svg style="position:absolute;left:872px;top:866px;width:26px;height:34px;" viewBox="0 0 26 34"><path d="M1.5 1.5 H24.5 V23 L13 32.5 L1.5 23Z" fill="#313335" stroke="#5e6060" stroke-width="3"/><rect x="7" y="11" width="12" height="3" fill="#5e6060"/></svg>
<svg style="position:absolute;left:872px;top:1064px;width:26px;height:34px;" viewBox="0 0 26 34"><path d="M1.5 1.5 H24.5 V23 L13 32.5 L1.5 23Z" fill="#313335" stroke="#5e6060" stroke-width="3"/><rect x="7" y="11" width="12" height="3" fill="#5e6060"/></svg>
<svg style="position:absolute;left:872px;top:1187px;width:26px;height:34px;" viewBox="0 0 26 34"><path d="M1.5 32.5 H24.5 V11 L13 1.5 L1.5 11Z" fill="#313335" stroke="#5e6060" stroke-width="3"/><rect x="7" y="20" width="12" height="3" fill="#5e6060"/></svg>
<svg style="position:absolute;left:872px;top:1253px;width:26px;height:34px;" viewBox="0 0 26 34"><path d="M1.5 32.5 H24.5 V11 L13 1.5 L1.5 11Z" fill="#313335" stroke="#5e6060" stroke-width="3"/><rect x="7" y="20" width="12" height="3" fill="#5e6060"/></svg>
<svg style="position:absolute;left:872px;top:1394px;width:26px;height:34px;" viewBox="0 0 26 34"><path d="M1.5 1.5 H24.5 V23 L13 32.5 L1.5 23Z" fill="#313335" stroke="#5e6060" stroke-width="3"/><rect x="7" y="11" width="12" height="3" fill="#5e6060"/></svg>
<svg style="position:absolute;left:872px;top:1517px;width:26px;height:34px;" viewBox="0 0 26 34"><path d="M1.5 32.5 H24.5 V11 L13 1.5 L1.5 11Z" fill="#313335" stroke="#5e6060" stroke-width="3"/><rect x="7" y="20" width="12" height="3" fill="#5e6060"/></svg>
<svg style="position:absolute;left:872px;top:1658px;width:26px;height:34px;" viewBox="0 0 26 34"><path d="M1.5 1.5 H24.5 V23 L13 32.5 L1.5 23Z" fill="#313335" stroke="#5e6060" stroke-width="3"/><rect x="7" y="11" width="12" height="3" fill="#5e6060"/></svg>
<svg style="position:absolute;left:872px;top:1782px;width:26px;height:34px;" viewBox="0 0 26 34"><path d="M1.5 32.5 H24.5 V11 L13 1.5 L1.5 11Z" fill="#313335" stroke="#5e6060" stroke-width="3"/><rect x="7" y="20" width="12" height="3" fill="#5e6060"/></svg>
<svg style="position:absolute;left:872px;top:1989px;width:26px;height:34px;" viewBox="0 0 26 34"><path d="M1.5 1.5 H24.5 V23 L13 32.5 L1.5 23Z" fill="#313335" stroke="#5e6060" stroke-width="3"/><rect x="7" y="11" width="12" height="3" fill="#5e6060"/></svg>
<svg style="position:absolute;left:929px;top:1712px;width:32px;height:44px;" viewBox="0 0 32 44"><path d="M16 0 A15.5 15.5 0 0 1 26 27 V30 H6 V27 A15.5 15.5 0 0 1 16 0Z" fill="#eaa836"/><rect x="7" y="33" width="18" height="3" fill="#afb1b3"/><rect x="8" y="38" width="16" height="3" fill="#afb1b3"/><rect x="10" y="42" width="12" height="2" fill="#afb1b3"/></svg>
<div class="code" style="left:902.5px;top:252.8px;height:66px"><span style="color:#cc7832;">const </span><span style="color:#9876aa;font-weight:bold;font-style:italic;">router</span></div>
<div id="f1669a7d41d" class="t" style="left:1203.0px;top:263.9px;font-size:35px;line-height:35px;color:#787878;font-family:'Liberation Sans', sans-serif;transform:scaleX(1.0442);">: Router</div>
<div class="code" style="left:1354.0px;top:252.8px;height:66px"><span style="color:#a9b7c6;"> = </span><span style="color:#9876aa;font-weight:bold;font-style:italic;">require</span><span style="color:#a9b7c6;">(</span><span style="color:#6a8759;">&quot;express&quot;</span><span style="color:#a9b7c6;">).</span><span style="color:#ffc66d;">Router</span><span style="color:#a9b7c6;">()</span><span style="color:#cc7832;">;</span></div>
<div class="code" style="left:902.5px;top:318.9px;height:66px"><span style="color:#cc7832;">const </span><span style="color:#808080;">mongoose</span></div>
<div id="ff202e9402d" class="t" style="left:1249.0px;top:329.9px;font-size:35px;line-height:35px;color:#787878;font-family:'Liberation Sans', sans-serif;transform:scaleX(0.7191);">:</div>
<div class="code" style="left:1287.0px;top:318.9px;height:66px"><span style="color:#a9b7c6;"> = </span><span style="color:#9876aa;font-weight:bold;font-style:italic;">require</span><span style="color:#a9b7c6;">(</span><span style="color:#6a8759;">&quot;mongoose&quot;</span><span style="color:#a9b7c6;">)</span><span style="color:#cc7832;">;</span></div>
<div class="code" style="left:902.5px;top:384.9px;height:66px"><span style="color:#cc7832;">const </span><span style="color:#9876aa;font-weight:bold;font-style:italic;">Person</span></div>
<div id="fc57101efb0" class="t" style="left:1203.0px;top:396.0px;font-size:35px;line-height:35px;color:#787878;font-family:'Liberation Sans', sans-serif;transform:scaleX(0.7191);">:</div>
<div class="code" style="left:1240.0px;top:384.9px;height:66px"><span style="color:#a9b7c6;"> = </span><span style="color:#9876aa;font-weight:bold;font-style:italic;">require</span><span style="color:#a9b7c6;">(</span><span style="color:#6a8759;">&quot;./../../db/generated/Person&quot;</span><span style="color:#a9b7c6;">)</span><span style="color:#cc7832;">;</span></div>
<div class="code" style="left:902.5px;top:517.1px;height:66px"><span style="color:#629755;font-style:italic;">/**</span></div>
<div class="code" style="left:902.5px;top:583.1px;height:66px"><span style="color:#629755;font-style:italic;"> * Get a Person by _id</span></div>
<div class="code" style="left:902.5px;top:649.2px;height:66px"><span style="color:#629755;font-style:italic;"> **/</span></div>
<div class="code" style="left:902.5px;top:715.3px;height:66px"><span style="color:#9876aa;font-weight:bold;font-style:italic;">router</span><span style="color:#a9b7c6;">.</span><span style="color:#9876aa;">get</span><span style="color:#a9b7c6;">(</span></div>
<div style="left:1161px;top:716px;width:108px;height:54px;background:#333333;border-radius:11px;"></div>
<div id="f08bb144ea4" class="t" style="left:1177.0px;top:725.4px;font-size:35px;line-height:35px;color:#787878;font-family:'Liberation Sans', sans-serif;transform:scaleX(0.9890);">path:</div>
<div class="code" style="left:1277.0px;top:715.3px;height:66px"><span style="color:#6a8759;">&quot;</span><span style="color:#6a8759;text-decoration:underline;text-decoration-color:#6a7f94;text-underline-offset:6px;text-decoration-thickness:2px;text-decoration-skip-ink:none;">/person/:_id</span><span style="color:#6a8759;">&quot;</span><span style="color:#cc7832;">, </span></div>
<div style="left:1651px;top:716px;width:172px;height:54px;background:#333333;border-radius:11px;"></div>
<div id="f25e54cb841" class="t" style="left:1667.0px;top:725.4px;font-size:35px;line-height:35px;color:#787878;font-family:'Liberation Sans', sans-serif;transform:scaleX(0.9723);">handlers:</div>
<div class="code" style="left:1830.0px;top:715.3px;height:66px"><span style="color:#cc7832;">async </span><span style="color:#a9b7c6;">(req</span></div>
<div id="fa067235c4b" class="t" style="left:2082.0px;top:726.4px;font-size:35px;line-height:35px;color:#787878;font-family:'Liberation Sans', sans-serif;transform:scaleX(1.0594);">: Request&lt;P, ResBody, ReqBody, ReqQuery, LocalsObj&gt;</div>
<div class="code" style="left:3041.0px;top:715.3px;height:66px"><span style="color:#cc7832;">,</span><span style="color:#a9b7c6;"> res</span></div>
<div id="ff873ff9bdc" class="t" style="left:3178.0px;top:726.4px;font-size:35px;line-height:35px;color:#787878;font-family:'Liberation Sans', sans-serif;transform:scaleX(1.0555);">: Response&lt;ResBody, LocalsObj&gt;</div>
<div class="code" style="left:994.3px;top:781.4px;height:66px"><span style="color:#cc7832;">try </span><span style="color:#a9b7c6;">{</span></div>
<div class="code" style="left:1086.0px;top:847.4px;height:66px"><span style="color:#cc7832;">if </span><span style="color:#a9b7c6;">(!req.</span><span style="color:#9876aa;">params</span><span style="color:#a9b7c6;">.</span><span style="color:#9876aa;">_id</span><span style="color:#a9b7c6;">) {</span></div>
<div class="code" style="left:1177.8px;top:913.5px;height:66px"><span style="color:#cc7832;">return </span><span style="color:#a9b7c6;">res</span></div>
<div class="code" style="left:1269.5px;top:979.6px;height:66px"><span style="color:#a9b7c6;">.</span><span style="color:#ffc66d;">status</span><span style="color:#a9b7c6;">(</span></div>
<div style="left:1459px;top:981px;width:115px;height:54px;background:#333333;border-radius:11px;"></div>
<div id="f8ff442511d" class="t" style="left:1474.0px;top:989.6px;font-size:35px;line-height:35px;color:#787878;font-family:'Liberation Sans', sans-serif;transform:scaleX(0.9927);">code:</div>
<div class="code" style="left:1584.0px;top:979.6px;height:66px"><span style="color:#6897bb;">400</span><span style="color:#a9b7c6;">)</span></div>
<div class="code" style="left:1269.5px;top:1045.6px;height:66px"><span style="color:#a9b7c6;">.</span><span style="color:#9876aa;">json</span><span style="color:#a9b7c6;">(</span></div>
<div style="left:1413px;top:1047px;width:116px;height:54px;background:#333333;border-radius:11px;"></div>
<div id="fbb1f82d6d8" class="t" style="left:1428.0px;top:1055.7px;font-size:35px;line-height:35px;color:#787878;font-family:'Liberation Sans', sans-serif;transform:scaleX(1.0161);">body:</div>
<div class="code" style="left:1535.0px;top:1045.6px;height:66px"><span style="color:#a9b7c6;">{</span></div>
<div class="code" style="left:1361.3px;top:1111.7px;height:66px"><span style="color:#9876aa;">error</span><span style="color:#a9b7c6;">: </span><span style="color:#6a8759;">&quot;Parameter &#x27;_id&#x27; is required but not provided.&quot;</span><span style="color:#cc7832;">,</span></div>
<div class="code" style="left:1269.5px;top:1177.8px;height:66px"><span style="color:#a9b7c6;">})</span><span style="color:#cc7832;">;</span></div>
<div class="code" style="left:1086.0px;top:1243.8px;height:66px"><span style="color:#a9b7c6;">}</span></div>
<div class="code" style="left:1086.0px;top:1376.0px;height:66px"><span style="color:#cc7832;">const </span><span style="color:#a9b7c6;">person = </span><span style="color:#cc7832;">await </span><span style="color:#9876aa;font-weight:bold;font-style:italic;">Person</span><span style="color:#a9b7c6;">.</span><span style="color:#ffc66d;">findOne</span><span style="color:#a9b7c6;">(</span></div>
<div style="left:1920px;top:1377px;width:111px;height:54px;background:#333333;border-radius:11px;"></div>
<div id="fa122caffd8" class="t" style="left:1935.0px;top:1386.1px;font-size:35px;line-height:35px;color:#787878;font-family:'Liberation Sans', sans-serif;transform:scaleX(1.0414);">filter:</div>
<div class="code" style="left:2039.0px;top:1376.0px;height:66px"><span style="color:#a9b7c6;">{ </span><span style="color:#9876aa;">_id</span><span style="color:#a9b7c6;">: req.</span><span style="color:#9876aa;">params</span><span style="color:#a9b7c6;">.</span><span style="color:#9876aa;">_id</span><span style="color:#a9b7c6;"> }</span><span style="color:#cc7832;">,</span></div>
<div style="left:2619px;top:1377px;width:200px;height:54px;background:#333333;border-radius:11px;"></div>
<div id="f398403b885" class="t" style="left:2636.0px;top:1386.1px;font-size:35px;line-height:35px;color:#787878;font-family:'Liberation Sans', sans-serif;transform:scaleX(1.0403);">projection:</div>
<div class="code" style="left:2829.0px;top:1376.0px;height:66px"><span style="color:#6a8759;">&quot;-__v&quot;</span><span style="color:#cc7832;">,</span></div>
<div style="left:3015px;top:1377px;width:156px;height:54px;background:#333333;border-radius:11px;"></div>
<div id="f6653c83858" class="t" style="left:3030.0px;top:1386.1px;font-size:35px;line-height:35px;color:#787878;font-family:'Liberation Sans', sans-serif;transform:scaleX(1.0359);">options:</div>
<div class="code" style="left:3180.0px;top:1376.0px;height:66px"><span style="color:#a9b7c6;">{</span></div>
<div class="code" style="left:1177.8px;top:1442.1px;height:66px"><span style="color:#9876aa;">minimize</span><span style="color:#a9b7c6;">: </span><span style="color:#cc7832;">true</span><span style="color:#cc7832;">,</span></div>
<div class="code" style="left:1086.0px;top:1508.1px;height:66px"><span style="color:#a9b7c6;">})</span><span style="color:#cc7832;">;</span></div>
<div class="code" style="left:1086.0px;top:1640.3px;height:66px"><span style="color:#cc7832;">if </span><span style="color:#a9b7c6;">(!person) {</span></div>
<div class="code" style="left:1177.8px;top:1706.3px;height:66px"><span style="color:#cc7832;">return </span><span style="color:#a9b7c6;">res.</span><span style="color:#ffc66d;">status</span><span style="color:#a9b7c6;">(</span></div>
<div style="left:1600px;top:1708px;width:114px;height:54px;background:#333333;border-radius:11px;"></div>
<div id="f2f49d78c1f" class="t" style="left:1615.0px;top:1716.4px;font-size:35px;line-height:35px;color:#787878;font-family:'Liberation Sans', sans-serif;transform:scaleX(0.9927);">code:</div>
<div class="code" style="left:1722.0px;top:1706.3px;height:66px"><span style="color:#6897bb;">404</span><span style="color:#a9b7c6;">).</span><span style="color:#9876aa;">send</span><span style="color:#a9b7c6;">(</span></div>
<div style="left:1958px;top:1708px;width:113px;height:54px;background:#333333;border-radius:11px;"></div>
<div id="fab5aaac9a0" class="t" style="left:1972.0px;top:1716.4px;font-size:35px;line-height:35px;color:#787878;font-family:'Liberation Sans', sans-serif;transform:scaleX(1.0161);">body:</div>
<div class="code" style="left:2082.0px;top:1706.3px;height:66px"><span style="color:#6a8759;">&quot;Not Found&quot;</span><span style="color:#a9b7c6;">)</span><span style="color:#cc7832;">;</span></div>
<div class="code" style="left:1086.0px;top:1772.4px;height:66px"><span style="color:#a9b7c6;">}</span></div>
<div class="code" style="left:1086.0px;top:1904.5px;height:66px"><span style="color:#cc7832;">return </span><span style="color:#a9b7c6;">res.</span><span style="color:#9876aa;">json</span><span style="color:#a9b7c6;">(person)</span><span style="color:#cc7832;">;</span></div>
<div class="code" style="left:994.3px;top:1970.6px;height:66px"><span style="color:#a9b7c6;">} </span><span style="color:#cc7832;">catch </span><span style="color:#a9b7c6;">(e) {</span></div>
<div class="code" style="left:1086.0px;top:2036.7px;height:66px"><span style="color:#9876aa;">console</span><span style="color:#a9b7c6;">.</span><span style="color:#ffc66d;">error</span><span style="color:#a9b7c6;">(e)</span><span style="color:#cc7832;">;</span></div>
<svg style="position:absolute;left:2536px;top:1725px;width:30px;height:50px;" viewBox="0 0 30 50"><path d="M2 2 H28 M15 2 V48 M2 48 H28" fill="none" stroke="#d8d8d8" stroke-width="4"/></svg>
<div style="left:3663px;top:249px;width:3px;height:6px;background:#3f3f3f;"></div>
<div style="left:3663px;top:321px;width:3px;height:1734px;background:#3f3f3f;"></div>
<svg style="position:absolute;left:3477px;top:270px;width:36px;height:33px;" viewBox="0 0 36 33"><path d="M18 0 L36 33 H0Z" fill="#c99a1c"/><rect x="15" y="10" width="6" height="10" fill="#2b2b2b"/><rect x="15" y="24" width="6" height="6" fill="#2b2b2b"/></svg>
<div class="t" style="left:3522.0px;top:273.4px;font-size:35px;line-height:35px;color:#c8c8c8;font-family:'Liberation Sans', sans-serif;">8</div>
<svg style="position:absolute;left:3564px;top:270px;width:36px;height:33px;" viewBox="0 0 36 33"><path d="M18 0 L36 33 H0Z" fill="#7b6f58"/><rect x="15" y="10" width="6" height="10" fill="#2b2b2b"/><rect x="15" y="24" width="6" height="6" fill="#2b2b2b"/></svg>
<div class="t" style="left:3609.0px;top:273.4px;font-size:35px;line-height:35px;color:#c8c8c8;font-family:'Liberation Sans', sans-serif;">2</div>
<svg style="position:absolute;left:3659px;top:278px;width:27px;height:17px;" viewBox="0 0 27 17"><path d="M2 15 L13.5 3 L25 15" fill="none" stroke="#a9abad" stroke-width="4"/></svg>
<svg style="position:absolute;left:3722px;top:280px;width:27px;height:17px;" viewBox="0 0 27 17"><path d="M2 2 L13.5 14 L25 2" fill="none" stroke="#a9abad" stroke-width="4"/></svg>
<div style="left:3744px;top:330px;width:24px;height:343px;background:#4a4a4a;"></div>
<div style="left:3729px;top:339px;width:42px;height:6px;background:#c99a1c;"></div>
<div style="left:3729px;top:418px;width:42px;height:6px;background:#c99a1c;"></div>
<div style="left:3729px;top:777px;width:42px;height:6px;background:#c99a1c;"></div>
<div style="left:3729px;top:960px;width:42px;height:6px;background:#c99a1c;"></div>
<div style="left:3729px;top:1022px;width:42px;height:6px;background:#6d6248;"></div>
<div style="left:3729px;top:1178px;width:42px;height:6px;background:#c99a1c;"></div>
<div style="left:3729px;top:1306px;width:42px;height:6px;background:#c99a1c;"></div>
<div style="left:3729px;top:1385px;width:42px;height:6px;background:#6d6248;"></div>
<div style="left:3729px;top:1604px;width:42px;height:6px;background:#c99a1c;"></div>
<div style="left:3729px;top:1734px;width:42px;height:6px;background:#c99a1c;"></div>
<div style="left:906px;top:2028px;width:1845px;height:24px;background:#4e4e4e;"></div>
<div style="left:687px;top:2055px;width:3084px;height:3px;background:#4b4b4b;"></div>
<div style="left:687px;top:2058px;width:3084px;height:69px;background:#313335;"></div>
<div id="f59da593967" class="t" style="left:718.0px;top:2077.4px;font-size:35px;line-height:35px;color:#bbbbbb;font-family:'Liberation Sans', sans-serif;transform:scaleX(1.0337);">callback for router.get()</div>
<div style="left:3771px;top:168px;width:3px;height:1956px;background:#2b2b2b;"></div>
<svg style="position:absolute;left:3787px;top:197px;width:38px;height:40px;" viewBox="0 0 38 40"><path d="M17 4 C9 4 7 10 6 16 L4 24 L1 29 H34 L31 24 L29 14 C28 9 25 4 17 4Z" fill="#afb1b3"/><path d="M11 32 H23 A6 5 0 0 1 11 32Z" fill="#afb1b3"/><circle cx="29" cy="8.5" r="9" fill="#3c3f41"/><circle cx="29" cy="8.5" r="7.5" fill="#c75b3c"/></svg>
<div id="f66aca6b406" class="t" style="left:3821.4px;top:251px;font-size:35px;line-height:42.0px;color:#afafaf;font-family:'Liberation Sans', sans-serif;transform:rotate(90deg) scaleX(0.9494);transform-origin:0 0">Notifications</div>
<svg style="position:absolute;left:3780px;top:495px;width:50px;height:50px;" viewBox="0 0 50 50"><path d="M12.9 13.9 C18 10 32 8.5 38 15 C43 21 40 30 30 31 C22 31.5 19 29 19 27 C19 24 24 23.5 28 24.5 C31 25 31 21 27 20 C20 18 9 20 9.5 28 C10 37 20 41 27 40.6 C31 40.5 35 39 37.9 36.9" fill="none" stroke="#afb1b3" stroke-width="3.2" stroke-linecap="round"/></svg>
<div id="fec189f9562" class="t" style="left:3821.4px;top:553px;font-size:35px;line-height:42.0px;color:#afafaf;font-family:'Liberation Sans', sans-serif;transform:rotate(90deg) scaleX(0.9077);transform-origin:0 0">AI Assistant</div>
<svg style="position:absolute;left:3775px;top:780px;width:59px;height:60px;" viewBox="0 0 59 60"><path d="M41 9.5 L23.5 16.2 L41 23" fill="none" stroke="#e6e6e6" stroke-width="4.5"/><path d="M22.4 27.2 H40.7 V35.5 C40.7 39.5 38.5 41.5 35.8 41.5 C33.5 41.5 32.3 40.3 31.6 38.8 C30.8 41.2 28.8 42.3 26.6 42.3 C24 42.3 22.4 40 22.4 37Z" fill="#e6e6e6"/><ellipse cx="27.6" cy="34.8" rx="2.2" ry="3.2" fill="#3c3f41"/><rect x="33" y="31.5" width="4.5" height="5" fill="#3c3f41"/></svg>
<div id="f193f0d1d3a" class="t" style="left:3821.4px;top:837px;font-size:35px;line-height:42.0px;color:#afafaf;font-family:'Liberation Sans', sans-serif;transform:rotate(90deg) scaleX(0.9120);transform-origin:0 0">VisualBoost</div>
<svg style="position:absolute;left:3775px;top:1040px;width:59px;height:72px;" viewBox="0 0 59 72"><g stroke="#afb1b3" stroke-width="3.8"><path d="M33 39 L20 55 M36.5 39 L42 55 M13.2 42.4 L16.5 55 M48.3 45.4 L44.5 55"/></g><circle cx="34.9" cy="35.4" r="7.3" fill="#afb1b3"/><circle cx="18.5" cy="59.5" r="7.5" fill="#afb1b3"/><circle cx="42.4" cy="59.5" r="7.5" fill="#afb1b3"/></svg>
<div id="fb37ebb8aa3" class="t" style="left:3821.4px;top:1121px;font-size:35px;line-height:42.0px;color:#afafaf;font-family:'Liberation Sans', sans-serif;transform:rotate(90deg) scaleX(0.9058);transform-origin:0 0">Endpoints</div>
<svg style="position:absolute;left:3790px;top:1909px;width:31px;height:36px;" viewBox="0 0 31 36"><path d="M15.5 0 L30.5 3 V20 C30.5 28 24 33 15.5 36 C7 33 0 28 0 20 V3Z" fill="#afb1b3"/><path d="M15.5 5 L25 7 V20 C25 26 20.5 29 15.5 31Z" fill="#3c3f41"/></svg>
<div id="f38187153d0" class="t" style="left:3821.4px;top:1960px;font-size:35px;line-height:42.0px;color:#afafaf;font-family:'Liberation Sans', sans-serif;transform:rotate(90deg) scaleX(0.8895);transform-origin:0 0">Coverage</div>
<div style="left:0px;top:2124px;width:687px;height:3px;background:#2b2b2b;"></div>
<div style="left:3771px;top:2124px;width:63px;height:3px;background:#2b2b2b;"></div>
<div style="left:0px;top:2190px;width:3834px;height:3px;background:#4d4d4d;"></div>
<div style="left:66px;top:2097px;width:294px;height:24px;background:#5a5b5d;"></div>
<div id="f75b9fde21d" class="t" style="left:147.0px;top:2145.2px;font-size:34px;line-height:34px;color:#bbbbbb;font-family:'Liberation Sans', sans-serif;transform:scaleX(0.9636);">Version Control</div>
<div id="f4e25c36711" class="t" style="left:490.0px;top:2145.2px;font-size:34px;line-height:34px;color:#bbbbbb;font-family:'Liberation Sans', sans-serif;transform:scaleX(0.9016);">TODO</div>
<div id="ff956d52055" class="t" style="left:691.0px;top:2145.2px;font-size:34px;line-height:34px;color:#bbbbbb;font-family:'Liberation Sans', sans-serif;transform:scaleX(0.9192);">Problems</div>
<div id="f69d68665be" class="t" style="left:939.0px;top:2145.2px;font-size:34px;line-height:34px;color:#bbbbbb;font-family:'Liberation Sans', sans-serif;transform:scaleX(0.9651);">Terminal</div>
<div id="fec976ddb91" class="t" style="left:1174.0px;top:2145.2px;font-size:34px;line-height:34px;color:#bbbbbb;font-family:'Liberation Sans', sans-serif;transform:scaleX(0.8821);">Services</div>
<svg style="position:absolute;left:95px;top:2135px;width:40px;height:50px;" viewBox="0 0 40 50"><circle cx="12.9" cy="13.7" r="4.9" fill="#afb1b3"/><circle cx="12.9" cy="39.4" r="4.9" fill="#afb1b3"/><circle cx="27.9" cy="18.8" r="4.9" fill="#afb1b3"/><path d="M12.9 13.7 V39.4 M27.5 19 C28 30 20 30 13 33" fill="none" stroke="#afb1b3" stroke-width="5"/></svg>
<svg style="position:absolute;left:444px;top:2148px;width:31px;height:26px;" viewBox="0 0 31 26"><rect x="0" y="0" width="6" height="5.5" fill="#afb1b3"/><rect x="9" y="0" width="21" height="5.5" fill="#afb1b3"/><rect x="0" y="9.7" width="6" height="5.5" fill="#afb1b3"/><rect x="9" y="9.7" width="21" height="5.5" fill="#afb1b3"/><rect x="0" y="19.2" width="6" height="5.8" fill="#afb1b3"/><rect x="9" y="19.2" width="21" height="5.8" fill="#afb1b3"/></svg>
<svg style="position:absolute;left:643px;top:2143.5px;width:32px;height:32px;" viewBox="0 0 32 32"><circle cx="16" cy="16" r="15.7" fill="#afb1b3"/><rect x="13" y="6" width="6" height="11" fill="#3c3f41"/><rect x="13" y="20" width="6" height="5.5" fill="#3c3f41"/></svg>
<svg style="position:absolute;left:892px;top:2145px;width:32px;height:32px;" viewBox="0 0 32 32"><rect x="0" y="0" width="32" height="32" fill="#afb1b3"/><path d="M6 7 L14 13 L6 19" fill="none" stroke="#3c3f41" stroke-width="3.5"/><rect x="16" y="22" width="11" height="3.5" fill="#3c3f41"/></svg>
<svg style="position:absolute;left:1122px;top:2142px;width:39px;height:38px;" viewBox="0 0 39 38"><path d="M10 0 H29 L39 19 L29 38 H10 L0 19Z" fill="#afb1b3"/><path d="M14 10 L28 19 L14 28Z" fill="#3c3f41"/></svg>
<svg style="position:absolute;left:33px;top:2205px;width:36px;height:36px;" viewBox="0 0 36 36"><rect x="8" y="2" width="26" height="24" fill="none" stroke="#afb1b3" stroke-width="3.5"/><path d="M2 9 V34 H27" fill="none" stroke="#afb1b3" stroke-width="3.5"/></svg>
<div id="f3113ba884d" class="t" style="left:115.0px;top:2205.2px;font-size:34px;line-height:34px;color:#bbbbbb;font-family:'Liberation Sans', sans-serif;transform:scaleX(1.0619);">Externally added files can be added to Git // View Files // Always Add // Don't Ask Again (14 minutes ago)</div>
<div id="f493e885b43" class="t" style="left:2619.0px;top:2206.2px;font-size:34px;line-height:34px;color:#bbbbbb;font-family:'Liberation Sans', sans-serif;transform:scaleX(0.9754);">23:54</div>
<div id="f8667c7add2" class="t" style="left:2791.0px;top:2206.2px;font-size:34px;line-height:34px;color:#bbbbbb;font-family:'Liberation Sans', sans-serif;transform:scaleX(0.9962);">Language Services</div>
<div id="f0d62d369e1" class="t" style="left:3114.0px;top:2206.2px;font-size:34px;line-height:34px;color:#bbbbbb;font-family:'Liberation Sans', sans-serif;transform:scaleX(0.8897);">CRLF</div>
<div id="f25426847f2" class="t" style="left:3228.0px;top:2206.2px;font-size:34px;line-height:34px;color:#bbbbbb;font-family:'Liberation Sans', sans-serif;transform:scaleX(0.9758);">UTF-8</div>
<div id="f49a3098f76" class="t" style="left:3358.0px;top:2206.2px;font-size:34px;line-height:34px;color:#bbbbbb;font-family:'Liberation Sans', sans-serif;transform:scaleX(0.9920);">4 spaces</div>
<div id="f05468c888a" class="t" style="left:3583.0px;top:2206.2px;font-size:34px;line-height:34px;color:#bbbbbb;font-family:'Liberation Sans', sans-serif;transform:scaleX(1.0312);">main</div>
<svg style="position:absolute;left:2738px;top:2206px;width:44px;height:34px;" viewBox="0 0 44 34"><path d="M11 2 Q6 2 6 7 V13 Q6 17 2 17 Q6 17 6 21 V27 Q6 32 11 32 M33 2 Q38 2 38 7 V13 Q38 17 42 17 Q38 17 38 21 V27 Q38 32 33 32" fill="none" stroke="#9aa7b0" stroke-width="4"/></svg>
<svg style="position:absolute;left:3520px;top:2192px;width:314px;height:55px;" viewBox="0 0 314 55"><circle cx="23" cy="15" r="5.3" fill="#afb1b3"/><circle cx="23" cy="46.7" r="5.3" fill="#afb1b3"/><circle cx="40.5" cy="18.7" r="5.3" fill="#afb1b3"/><path d="M23 15 V46.7 M40.5 18.7 C40.5 34 25 30 25 40" fill="none" stroke="#afb1b3" stroke-width="4.5"/><path d="M172.3 28 V20.5 A7.5 7.5 0 0 1 187.3 20.5 V28" fill="none" stroke="#afb1b3" stroke-width="4.5"/><rect x="178.8" y="28" width="24.2" height="18" fill="#afb1b3"/><circle cx="263" cy="30.9" r="18.2" fill="#afb1b3"/><rect x="260" y="19.3" width="6" height="11.2" fill="#3c3f41"/><rect x="260" y="36.8" width="6" height="5.6" fill="#3c3f41"/></svg>
</body></html>
